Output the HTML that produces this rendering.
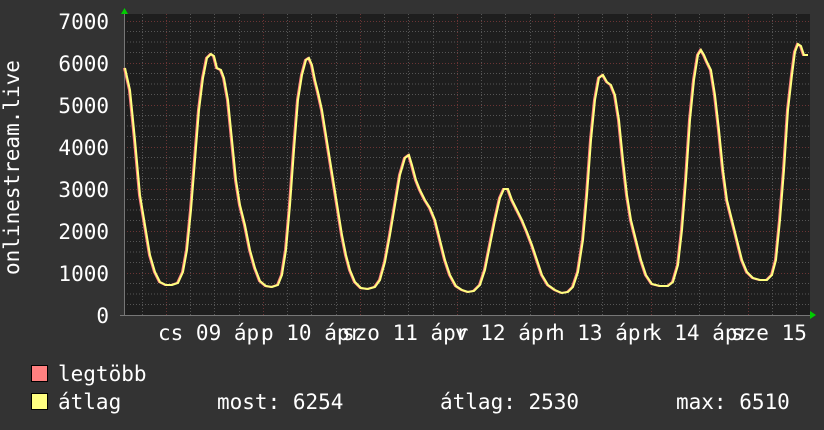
<!DOCTYPE html>
<html><head><meta charset="utf-8"><style>
html,body{margin:0;padding:0;background:#333333;width:824px;height:430px;overflow:hidden}
svg text{font-family:"DejaVu Sans Mono","Liberation Mono",monospace;font-size:21px;fill:#ffffff}
</style></head><body>
<svg width="824" height="430" viewBox="0 0 824 430" xmlns="http://www.w3.org/2000/svg">
<rect width="824" height="430" fill="#333333"/>
<rect x="124" y="14" width="686" height="301" fill="#1e1e1e"/>
<g stroke="#555" stroke-width="1" stroke-dasharray="1,2">
<path d="M124 304.5H810M124 294H810M124 283.5H810M124 262.5H810M124 252H810M124 241.5H810M124 220.5H810M124 210H810M124 199.5H810M124 178.5H810M124 168H810M124 157.5H810M124 136.5H810M124 126H810M124 115.5H810M124 94.5H810M124 84H810M124 73.5H810M124 52.5H810M124 42H810M124 31.5H810"/>
<path d="M142.5 14V315M190.5 14V315M214.5 14V315M239.5 14V315M287.5 14V315M311.5 14V315M336.5 14V315M384.5 14V315M408.5 14V315M433.5 14V315M481.5 14V315M505.5 14V315M530.5 14V315M578.5 14V315M602.5 14V315M627.5 14V315M675.5 14V315M699.5 14V315M724.5 14V315M772.5 14V315M796.5 14V315"/>
</g>
<g stroke="#6a3434" stroke-width="1" stroke-dasharray="1,2">
<path d="M124 273.5H810M124 231.5H810M124 189.5H810M124 147.5H810M124 105.5H810M124 63.5H810M124 21.5H810"/>
<path d="M166.5 14V315M263.5 14V315M360.5 14V315M457.5 14V315M554.5 14V315M651.5 14V315M748.5 14V315"/>
</g>
<path d="M120 315.5H812M124.5 315V10" stroke="#777" stroke-width="1"/>
<polygon points="121,14 128,14 124.5,8" fill="#00cc00"/>
<polygon points="810,311 810,319 816,315" fill="#00cc00"/>
<polyline fill="none" stroke="#ff8080" stroke-width="2" transform="translate(-1,0)" points="125,68 130,90 135,140 140,195 145,225 150,255 155,272 160,282 166,285 172,285 178,283 183,272 187,250 191,210 195,160 199,110 203,78 207,58 211,54 214,56 217,68 221,70 224,78 228,100 232,140 236,180 240,205 245,225 250,250 255,268 260,281 266,286 272,287 278,285 282,275 286,250 290,205 294,150 298,100 302,75 306,60 309,58 312,65 315,80 318,92 322,110 326,135 330,160 334,185 338,210 342,235 346,255 350,270 355,282 361,288 368,289 375,287 380,280 385,262 390,235 395,205 400,175 405,158 409,155 412,165 416,180 420,190 425,200 430,208 435,220 440,240 445,260 450,275 456,286 462,290 468,292 474,291 480,285 485,270 490,245 495,220 500,198 504,189 508,189 512,200 517,210 522,220 527,232 532,245 537,260 542,275 548,285 555,290 562,293 568,292 573,287 578,272 583,240 587,195 591,140 595,100 599,78 603,75 607,82 611,85 615,95 619,120 623,160 627,195 631,220 636,240 641,260 646,275 652,284 660,286 668,286 673,282 678,265 682,230 686,180 690,120 694,80 698,55 701,50 704,55 707,62 711,70 715,95 719,130 723,170 727,200 732,220 737,240 742,260 747,272 753,278 760,280 767,280 772,275 776,260 780,220 784,170 788,110 792,75 795,52 798,44 801,46 804,55 808,55"/>
<polyline fill="none" stroke="#ffff80" stroke-width="2" points="125,68 130,90 135,140 140,195 145,225 150,255 155,272 160,282 166,285 172,285 178,283 183,272 187,250 191,210 195,160 199,110 203,78 207,58 211,54 214,56 217,68 221,70 224,78 228,100 232,140 236,180 240,205 245,225 250,250 255,268 260,281 266,286 272,287 278,285 282,275 286,250 290,205 294,150 298,100 302,75 306,60 309,58 312,65 315,80 318,92 322,110 326,135 330,160 334,185 338,210 342,235 346,255 350,270 355,282 361,288 368,289 375,287 380,280 385,262 390,235 395,205 400,175 405,158 409,155 412,165 416,180 420,190 425,200 430,208 435,220 440,240 445,260 450,275 456,286 462,290 468,292 474,291 480,285 485,270 490,245 495,220 500,198 504,189 508,189 512,200 517,210 522,220 527,232 532,245 537,260 542,275 548,285 555,290 562,293 568,292 573,287 578,272 583,240 587,195 591,140 595,100 599,78 603,75 607,82 611,85 615,95 619,120 623,160 627,195 631,220 636,240 641,260 646,275 652,284 660,286 668,286 673,282 678,265 682,230 686,180 690,120 694,80 698,55 701,50 704,55 707,62 711,70 715,95 719,130 723,170 727,200 732,220 737,240 742,260 747,272 753,278 760,280 767,280 772,275 776,260 780,220 784,170 788,110 792,75 795,52 798,44 801,46 804,55 808,55"/>
<g text-anchor="end">
<text x="109" y="29">7000</text>
<text x="109" y="71">6000</text>
<text x="109" y="113">5000</text>
<text x="109" y="155">4000</text>
<text x="109" y="197">3000</text>
<text x="109" y="239">2000</text>
<text x="109" y="281">1000</text>
<text x="109" y="323">0</text>
</g>
<text transform="translate(19,275) rotate(-90)">onlinestream.live</text>
<text x="158" y="340">cs 09 ápr</text>
<text x="261" y="340">p 10 ápr</text>
<text x="342" y="340">szo 11 ápr</text>
<text x="455" y="340">v 12 ápr</text>
<text x="552" y="340">h 13 ápr</text>
<text x="649" y="340">k 14 ápr</text>
<text x="731" y="340">sze 15</text>
<rect x="31.5" y="365.5" width="16" height="16" fill="#ff8080" stroke="#000"/>
<rect x="31.5" y="393.5" width="16" height="16" fill="#ffff80" stroke="#000"/>
<text x="58" y="381">legtöbb</text>
<text x="58" y="409">átlag</text>
<text x="217" y="409">most: 6254</text>
<text x="440" y="409">átlag: 2530</text>
<text x="676" y="409">max: 6510</text>
</svg>
</body></html>
